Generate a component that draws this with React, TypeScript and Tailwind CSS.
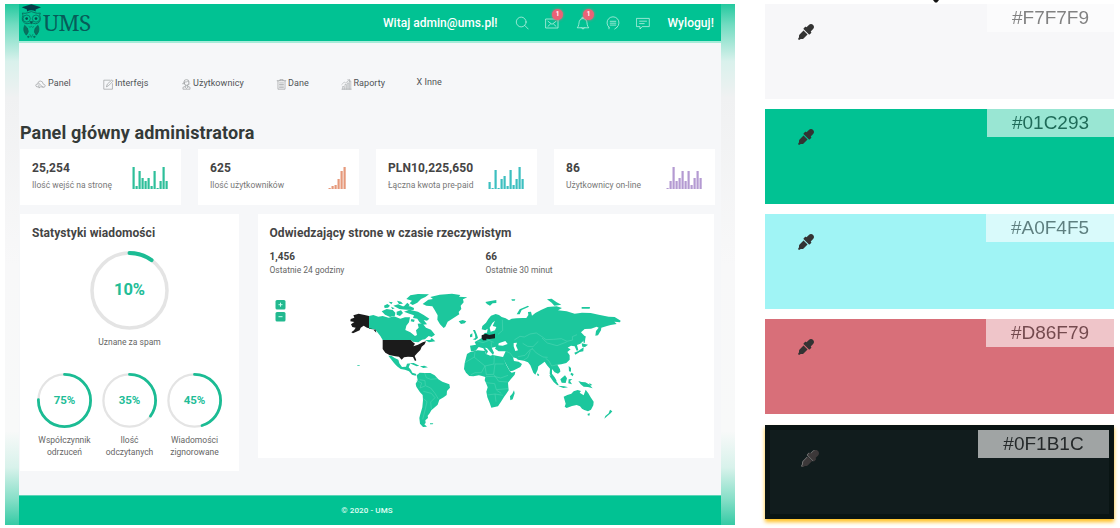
import React from "react";
import { FaEyeDropper } from "react-icons/fa";

type Stat = { value: string; label: string; bars: number[]; color: string };

const stats: Stat[] = [
  { value: "25,254", label: "Ilość wejść na stronę", bars: [22, 3, 18, 11, 8, 11, 3, 18, 1, 8, 22, 8], color: "#2ebf9a" },
  { value: "625", label: "Ilość użytkowników", bars: [1, 3, 4, 10, 18, 22], color: "#e6997b" },
  { value: "PLN10,225,650", label: "Łączna kwota pre-paid", bars: [7, 1, 19, 1, 10, 13, 3, 19, 4, 10, 22, 10], color: "#3dbfc0" },
  { value: "86", label: "Użytkownicy on-line", bars: [1, 8, 22, 8, 11, 18, 8, 18, 4, 11, 18, 11], color: "#b49ad2" },
];

function Bars({ data, color }: { data: number[]; color: string }) {
  const w = data.length * 3;
  return (
    <svg width={w} height={23} viewBox={`0 0 ${w} 23`} className="shrink-0">
      {data.map((h, i) => (
        <rect key={i} x={i * 3 + 0.5} y={23 - h} width={2.2} height={h} fill={color} />
      ))}
    </svg>
  );
}

function StatCard({ s }: { s: Stat }) {
  return (
    <div className="flex h-[56px] w-[160.5px] shrink-0 justify-between bg-white pl-[12px] pr-[12.5px]">
      <div className="whitespace-nowrap pt-[11px]">
        <div className="text-[12px] font-bold leading-[16px] tracking-[0.12px] text-[#444]">{s.value}</div>
        <div className="mt-[3px] text-[8.5px] leading-[12px] tracking-[0.02px] text-[#777]">{s.label}</div>
      </div>
      <div className="pt-[17px]">
        <Bars data={s.bars} color={s.color} />
      </div>
    </div>
  );
}

function Ring({ size, stroke, pct, text, textClass }: { size: number; stroke: number; pct: number; text: string; textClass: string }) {
  const r = (size - stroke) / 2;
  const c = 2 * Math.PI * r;
  return (
    <div className="grid place-items-center">
      <svg width={size} height={size} viewBox={`0 0 ${size} ${size}`} className="col-start-1 row-start-1 -rotate-90">
        <circle cx={size / 2} cy={size / 2} r={r} fill="none" stroke="#e4e4e4" strokeWidth={stroke - 0.5} />
        <circle cx={size / 2} cy={size / 2} r={r} fill="none" stroke="#1bbc94" strokeWidth={stroke} strokeDasharray={`${(c * pct) / 100} ${c}`} strokeLinecap="round" />
      </svg>
      <span className={`col-start-1 row-start-1 font-bold text-[#22bd97] ${textClass}`}>{text}</span>
    </div>
  );
}

function Owl() {
  return (
    <svg width="24" height="36" viewBox="0 0 72 111" preserveAspectRatio="none" fill="none" stroke="#08695a" strokeWidth="2.6" className="-ml-[1px]">
      <path d="M8 10 37 1 66 10 50 17V23Q37 16 24 23V17Z" fill="#063e49" stroke="none" />
      <path d="M10 28Q14 34 10 42Q8 58 24 61L37 58L50 61Q66 58 64 42Q60 34 64 28Q55 30 48 27Q37 20 26 27Q19 30 10 28Z" />
      <circle cx="23" cy="45" r="11" strokeWidth="2.3" />
      <circle cx="51" cy="45" r="11" strokeWidth="2.3" />
      <circle cx="23" cy="45" r="4" fill="#064d4a" stroke="none" />
      <circle cx="51" cy="45" r="4" fill="#064d4a" stroke="none" />
      <path d="M33 54 37 62 41 54Z" fill="#064d4a" />
      <path d="M17 66Q10 82 22 96Q32 87 25 74ZM57 66Q64 82 52 96Q42 87 49 74Z" fill="#08715f" />
      <path d="M29 69 33 72 37 69 41 72 45 69M32 93 37 103 42 93" strokeWidth="1.8" />
      <path d="M24 101h8M28 98v7M42 101h8M46 98v7" />
    </svg>
  );
}

type IconProps = { children: React.ReactNode; color?: string; size?: number; sw?: number };
function Icon({ children, color = "#8a8e90", size = 11, sw = 0.75 }: IconProps) {
  return (
    <svg width={size} height={size} viewBox="0 0 14 14" fill="none" stroke={color} strokeWidth={sw} strokeLinecap="round" strokeLinejoin="round" className="shrink-0">
      {children}
    </svg>
  );
}

function Badge() {
  return (
    <span className="absolute -top-[7px] left-[7px] flex h-[11px] w-[11px] items-center justify-center rounded-full bg-[#ea6276] text-[6.5px] font-bold leading-none text-white shadow-[0_0_3px_#d86f79]">
      1
    </span>
  );
}

function Header() {
  const c = "#c4f3e6";
  return (
    <header className="flex h-[39px] border-b-2 border-[#a6ecd9] bg-[#01c293] pl-px text-white">
      <Owl />
      <span className="mt-[4px] w-[49px] font-['Noto_Serif','DejaVu_Serif',serif] text-[22.5px] leading-[30px] tracking-[-0.6px] text-[#075c59]">UMS</span>
      <div className="ml-[291px] flex h-[37px] items-center whitespace-nowrap">
        <span className="w-[116px] text-[12px] font-medium tracking-[0.03px]">Witaj admin@ums.pl!</span>
        <span className="ml-[16px]"><Icon color={c} size={14}><circle cx="6.2" cy="6" r="4.9" /><path d="m9.8 9.5 3.4 3.5" /></Icon></span>
        <span className="relative ml-[16px]">
          <Icon color={c} size={14}><path d="M1 3h12v9H1zM3 5.3l4 3 4-3M3 10.3l2.4-2.2M11 10.3 8.6 8.1" /></Icon>
          <Badge />
        </span>
        <span className="relative ml-[17px]">
          <Icon color={c} size={14}><path d="M1.5 11.5C3.2 9.5 2.7 7.5 3.3 5.3Q4 2.500 7 2.500T10.700 5.300C11.300 7.500 10.800 9.500 12.500 11.500ZM6 2.400V1.300h2V2.400M5.300 11.700Q7 14.500 8.700 11.700" /></Icon>
          <Badge />
        </span>
        <span className="ml-[16px]"><Icon color={c} size={14}><path d="M3 11.300A6 6 0 1 1 11 11.300M4.200 5.300h5.600M4.200 7.200h5.600M4.200 9.100h5.600M3 11.300v1.500M11 11.300 8.700 13" /></Icon></span>
        <span className="ml-[16px]"><Icon color={c} size={14}><path d="M.8 2.400h12.500v8.200H6.200L4 13V10.600H.8ZM3.600 5.200h6.900M3.600 7.600h4.600" /></Icon></span>
        <span className="ml-[17.500px] text-[12px] font-medium tracking-[0.050px]">Wyloguj!</span>
      </div>
    </header>
  );
}

function Nav() {
  return (
    <nav className="flex h-[82px] items-center pl-[15.500px] text-[9px] tracking-[0.06px] text-[#505356]">
      <div className="flex w-[68px] items-center gap-[2.500px]">
        <Icon><path d="M4 10H2.500Q.8 9.500 1 7.800 1.500 6 3.500 6.500 3.500 3 6.500 2.500q3.500 0 4 4 2.500.5 2.500 2T11.500 10.500H10M5 5.500l4 4M5 7.500v4l2-1.500h3" /></Icon>Panel
      </div>
      <div className="flex w-[78px] items-center gap-[1.500px]">
        <Icon><path d="M9 1.500H1V13h11V6M4.500 9.500l1-3 6-5.500 1.500 1.500-6 6Z" /></Icon>Interfejs
      </div>
      <div className="flex w-[95px] items-center gap-[1.500px]">
        <Icon><path d="M4 5V3Q4 .8 7 .8T10 3V5Q10 8 7 8T4 5ZM4 4Q8 4 8.500 2.500 9 4 10 4M6 8v1.500L2.500 10.500V13h9v-2.500L8 9.500V8M5 10l2 2 2-2M2 6h2M9 8l2-2" /></Icon>Użytkownicy
      </div>
      <div className="flex w-[65.500px] items-center gap-[1.500px]">
        <Icon><path d="M1.500 2.200h11M5 2V.8h4V2M2.500 2.500V13h9V2.500M4.500 5h5M4.500 7h5M4.500 9h5M4.500 11h5" /></Icon>Dane
      </div>
      <div className="flex w-[75.500px] items-center gap-[1.500px]">
        <Icon sw={0.55}><path d="M1 13h12M2 13V9.500h1.800V13M5 13V7h1.800v6M8 13V5h1.800v8M11 13V2.500h1.500V13M1 7l3-3 2 1 5-4M8.500 1H11v2" /></Icon>Raporty
      </div>
      <div className="-mt-[3px]">X Inne</div>
    </nav>
  );
}

function WorldMap() {
  return (
    <svg width="380" height="155" viewBox="270 285 380 155" fill="#1cc79d">
      <g transform="translate(330 280) scale(.33333)">
        <path d="M117 108 130 105 145 110 158 108 176 113 192 109 211 116 225 112 240 112 237 127 229 137 226 150 241 157 255 168 261 165 258 151 266 143 263 131 277 130 288 143 303 149 315 164 305 171 296 168 285 178 276 179 265 187 249 185 242 180 158 180 151 168 141 155 134 148 117 146Z" />
        <path d="M229 57 241 46 264 42 297 43 286 51 273 57 262 68 248 75 239 70 246 62ZM162 77 172 72 180 77 174 83 164 84ZM155 94 170 87 188 90 196 98 195 107 180 111 165 104ZM190 77 205 73 218 79 240 79 252 84 251 90 228 89 208 87ZM200 95 213 91 219 99 210 108 200 104ZM222 95 238 89 264 95 281 105 298 116 291 122 281 120 291 133 279 134 268 126 262 116 249 114 252 106 238 101ZM201 62 213 65 219 71 207 72ZM176 65 188 67 184 73ZM244 117 254 119 252 126 242 124ZM222 79 232 68 239 75 231 84ZM183 80 194 85 187 88Z" />
        <path d="M278 72 295 59 309 57 301 51 329 44 366 41 391 45 387 50 412 52 399 58 401 67 392 77 394 87 386 96 388 103 366 117 353 125 346 140 341 144 330 133 322 119 323 106 314 90 307 79 289 77ZM386 124 398 120 409 124 404 130 393 132ZM285 180 301 180 305 174 316 184 297 187Z" />
        <path d="M175 227 184 227 194 234 205 239 208 250 216 261 228 260 231 251 241 250 236 262 243 270 247 278 259 282 257 287 246 284 237 274 225 269 212 267 201 259 192 249ZM239 250 251 249 268 257 260 259ZM270 259 283 257 294 262 280 264Z" />
        <path d="M260 286 269 278 284 279 301 279 314 286 325 298 337 305 358 313 360 323 351 333 350 345 341 352 328 359 323 374 312 384 304 391 299 400 293 407 294 414 286 421 287 429 283 433 291 440 279 441 270 431 268 414 270 406 277 382 279 361 278 345 270 337 259 320 257 311 263 301ZM300 430 310 430 308 433 300 433ZM82 256 89 256 89 258 82 258Z" />
        <g fill="#1b1b1b">
          <path d="M117 146V108L104 105 86 101 70 106 73 113 62 117 61 124 73 126 63 133 67 141 77 143 72 151 64 157 69 160 89 151 92 143 101 137 111 143 128 147 139 158 137 149Z" />
          <path d="M158 180H242L248 186 255 191 250 199 264 194 278 187 288 184 284 193 275 200 271 210 262 219 254 228 259 241 255 243 249 231 234 230 222 232 215 239 207 230 196 229 178 225 166 218 158 207Z" />
        </g>
        <path d="M269 299 285 302 286 317 302 324 315 340 325 357M284 279 289 293 302 298 322 296M260 302 275 309 270 324 285 318M280 334 304 340 315 353 302 366 304 387M280 356 291 365 286 387 278 418" fill="none" stroke="#5bd8b9" strokeWidth="1.500" />
      </g>
      <g transform="translate(460 280) scale(.33333)">
        <path d="M65 148 67 138 78 128 85 117 93 107 107 102 117 105 125 111 137 115 147 121 155 116 169 115 188 114 199 114 205 105 204 96 213 95 216 107 226 99 243 90 263 81 290 79 306 84 294 91 320 94 344 101 366 98 392 99 416 104 446 110 464 111 482 122 480 127 463 125 470 132 452 135 441 138 424 143 423 151 414 166 406 167 408 153 416 143 410 140 393 146 374 147 363 157 376 170 374 179 361 191 351 195 355 211 350 212 344 199 333 197 323 203 332 208 322 216 329 226 329 239 319 249 304 253 292 254 300 268 301 275 294 281 284 277 276 267 276 281 284 292 290 302 286 304 274 291 269 281 270 266 261 256 254 245 246 251 235 259 233 269 226 284 220 278 211 256 204 247 192 242 174 239 169 235 159 232 162 243 176 245 186 252 181 261 159 272 150 274 141 257 128 233 137 214 116 214 105 206 108 200 95 203 102 218 99 225 89 213 81 204 75 203 84 214 80 223 70 205 56 201 47 212 33 214 30 197 48 194 44 186 56 179 71 171 73 159 81 158 83 146 76 151Z" />
        <path d="M38 178 46 174 45 164 39 150 45 150 51 164 54 174 46 180ZM30 164 37 160 37 170 30 172ZM76 66 91 63 109 60 109 69 98 70 90 77 81 72ZM154 58 166 58 164 62 156 62ZM261 58 275 56 290 67 304 74 283 77 275 68ZM170 103 179 88 204 77 207 80 185 90 179 103ZM365 81 390 81 389 86 365 86ZM372 168 377 169 374 190 370 187ZM365 190 384 194 375 201 367 200ZM371 202 370 214 359 216 346 224 343 218 355 213 362 208Z" />
        <path d="M21 222 31 216 53 211 75 213 78 222 91 227 98 225 129 231 139 255 149 273 155 278 166 275 164 284 151 299 144 308 145 321 146 331 139 341 132 351 124 364 114 379 94 383 89 369 82 352 79 335 83 322 78 309 74 301 76 291 66 288 57 286 40 289 28 288 18 278 12 267 14 250ZM162 331 164 340 158 358 151 361 150 349 157 341ZM233 280 238 285 235 288 231 285Z" />
        <path d="M268 285 277 289 287 301 296 314 292 316 281 306 271 292ZM301 298 315 286 321 295 317 309 305 308ZM293 317 313 319 324 322 310 324ZM326 298 337 297 330 303 336 313 325 310ZM326 258 333 264 333 275 327 274ZM334 278 341 282 338 289 331 283ZM355 303 365 306 376 307 387 313 398 325 384 321 371 320 362 313ZM388 309 397 315 389 317Z" />
        <path d="M311 350 322 345 334 341 341 334 353 330 363 333 359 338 371 346 377 329 385 340 392 352 401 365 400 376 393 389 384 394 373 390 366 386 360 379 350 375 336 378 320 384 314 380 317 371ZM383 401 390 400 388 407 383 406ZM450 389 457 394 452 400 443 407 433 416 436 408 446 400Z" />
        <path d="M89 143 97 129 105 122 98 138 109 141 105 151 92 155ZM116 190 136 183 143 192 128 197 115 196ZM161 189 171 188 168 197 174 211 166 213 161 199Z" fill="#fff" />
        <path d="M65 166 77 161 88 165 105 161 105 175 89 177 79 176 79 181 69 181 65 175Z" fill="#171e20" />
        <path d="M127 119 128 151 114 163M163 180 180 169 193 171 210 162 229 159 246 170 258 179 281 178 304 176 321 184 338 180 337 170 351 164M246 174 262 189 291 197 320 186M188 190 203 199 219 200 235 184M174 230 195 226 208 211 219 206M216 205 229 219 249 231 263 232M139 214 151 220 160 233M190 241 203 233 211 212M257 235 267 243 275 258 292 254M15 248 43 231 45 215M42 231 75 258 102 252 103 226M75 258 64 278 45 278 32 285M75 258 79 284 101 283 105 252 131 252M78 290 101 289 122 294 144 286M102 284 116 304 143 306M78 308 104 311 109 329 144 326M82 345 105 342 129 346M105 342 108 365M110 331 124 340M52 183 69 188 87 181 101 187M94 187 94 201" fill="none" stroke="#5bd8b9" strokeWidth="1.500" />
      </g>
      <g>
        <rect x="275.500" y="300" width="10" height="9.500" rx="1.500" fill="#22b98f" />
        <rect x="275.500" y="312" width="10" height="9.500" rx="1.500" fill="#22b98f" />
        <path d="M278.500 304.700h4M280.500 302.700v4M278.500 316.700h4" stroke="#c5fff0" />
      </g>
    </svg>
  );
}

const rings = [
  { pct: 75, a: "Współczynnik", b: "odrzuceń" },
  { pct: 35, a: "Ilość", b: "odczytanych" },
  { pct: 45, a: "Wiadomości", b: "zignorowane" },
];

function Dashboard() {
  return (
    <section className="flex h-[521px] w-[730px] shrink-0 bg-[linear-gradient(to_bottom,#24c99f_0%,#72dcc1_4%,#d9f1ec_11%,#f0f1f2_18%,#f8f8f9_50%,#f8f9f9_82%,#d8f2eb_89%,#87dfc8_95%,#35cba5_100%)] px-[14px] font-[Roboto,sans-serif]">
      <div className="flex w-[702.500px] flex-col bg-[#f6f7f9]">
        <Header />
        <Nav />
        <h1 className="mt-[-5px] h-[29px] whitespace-nowrap pl-px text-[18px] font-bold leading-[25px] tracking-[0.120px] text-[#343a38]">Panel główny administratora</h1>
        <div className="flex gap-[17.500px] pl-px">
          {stats.map((s) => <StatCard key={s.value} s={s} />)}
        </div>
        <div className="mt-[9px] flex items-start gap-[19px] pl-px">
          <div className="flex h-[257px] w-[219px] flex-col items-center bg-white">
            <h2 className="mt-[11px] self-start pl-[12px] text-[12px] font-bold leading-[16px] tracking-[0.080px] text-[#444]">Statystyki wiadomości</h2>
            <div className="mt-[10px]"><Ring size={79} stroke={4} pct={10} text="10%" textClass="text-[16.500px]" /></div>
            <div className="mt-[6px] text-[8.500px] leading-[12px] text-[#666]">Uznane za spam</div>
            <div className="mt-[25px] flex">
              {rings.map((r) => (
                <div key={r.pct} className="flex w-[65px] flex-col items-center whitespace-nowrap text-center">
                  <Ring size={55} stroke={2.800} pct={r.pct} text={`${r.pct}%`} textClass="text-[11.500px]" />
                  <div className="mt-[6px] text-[8.500px] leading-[12px] text-[#666]">{r.a}<br />{r.b}</div>
                </div>
              ))}
            </div>
          </div>
          <div className="h-[244px] w-[456px] bg-white pl-[11.500px] pt-[11px]">
            <h2 className="text-[12px] font-bold leading-[16px] tracking-[0.090px] text-[#444]">Odwiedzający strone w czasie rzeczywistym</h2>
            <div className="mt-[9px] flex text-[8.500px] leading-[12px] text-[#666]">
              <div className="w-[216px]"><div className="text-[10px] font-bold leading-[14px] text-[#444]">1,456</div>Ostatnie 24 godziny</div>
              <div><div className="text-[10px] font-bold leading-[14px] text-[#444]">66</div>Ostatnie 30 minut</div>
            </div>
            <div className="mt-[9px]"><WorldMap /></div>
          </div>
        </div>
        <footer className="mt-auto flex h-[30px] items-start justify-center border-t border-[#5cd4b7] bg-[#01c293] pt-[9px] text-[8px] font-medium leading-[12px] tracking-[0.100px] text-[#e0fff5]">
          <span className="-ml-[6px]">© 2020 - UMS</span>
        </footer>
      </div>
    </section>
  );
}

const swatches = [
  { hex: "#F7F7F9", cls: "mb-[10px] bg-[#f7f7f9]", label: "w-[127px]" },
  { hex: "#01C293", cls: "mb-[10px] bg-[#01c293]", label: "w-[127px]" },
  { hex: "#A0F4F5", cls: "mb-[10px] bg-[#a0f4f5]", label: "w-[128px]" },
  { hex: "#D86F79", cls: "mb-[11px] bg-[#d86f79]", label: "w-[128px]" },
];

function Palette() {
  return (
    <aside className="ml-[30px] w-[349px] font-['Liberation_Sans',Arial,sans-serif] text-[19px]">
      {swatches.map((s) => (
        <div key={s.hex} className={`flex h-[95px] justify-between ${s.cls}`}>
          <FaEyeDropper size={16} color="#333" className="ml-[33px] mt-[20px]" />
          <span className={`flex h-[28px] justify-center bg-white leading-[27px] text-[#333] opacity-60 ${s.label}`}>{s.hex}</span>
        </div>
      ))}
      <div className="flex h-[94px] justify-between border-[5px] border-[#091413] bg-[#111c1d] shadow-[0_3px_4px_#ffbe1c]">
        <FaEyeDropper size={17} color="#3c3839" className="ml-[32px] mt-[20px] drop-shadow-[-0.500px_0.500px_0_#777]" />
        <span className="flex h-[28px] w-[131px] justify-center bg-white leading-[27px] text-[#333] opacity-60">#0F1B1C</span>
      </div>
    </aside>
  );
}

export default function App() {
  return (
    <main className="relative flex h-[528px] w-[1120px] overflow-hidden bg-white pl-[5px] pt-[4px]">
      <Dashboard />
      <Palette />
      <svg className="absolute left-[931px] top-0" width="10" height="3" viewBox="0 0 10 3"><path d="M2 0h6L6 2.500H4Z" fill="#111" /></svg>
    </main>
  );
}
